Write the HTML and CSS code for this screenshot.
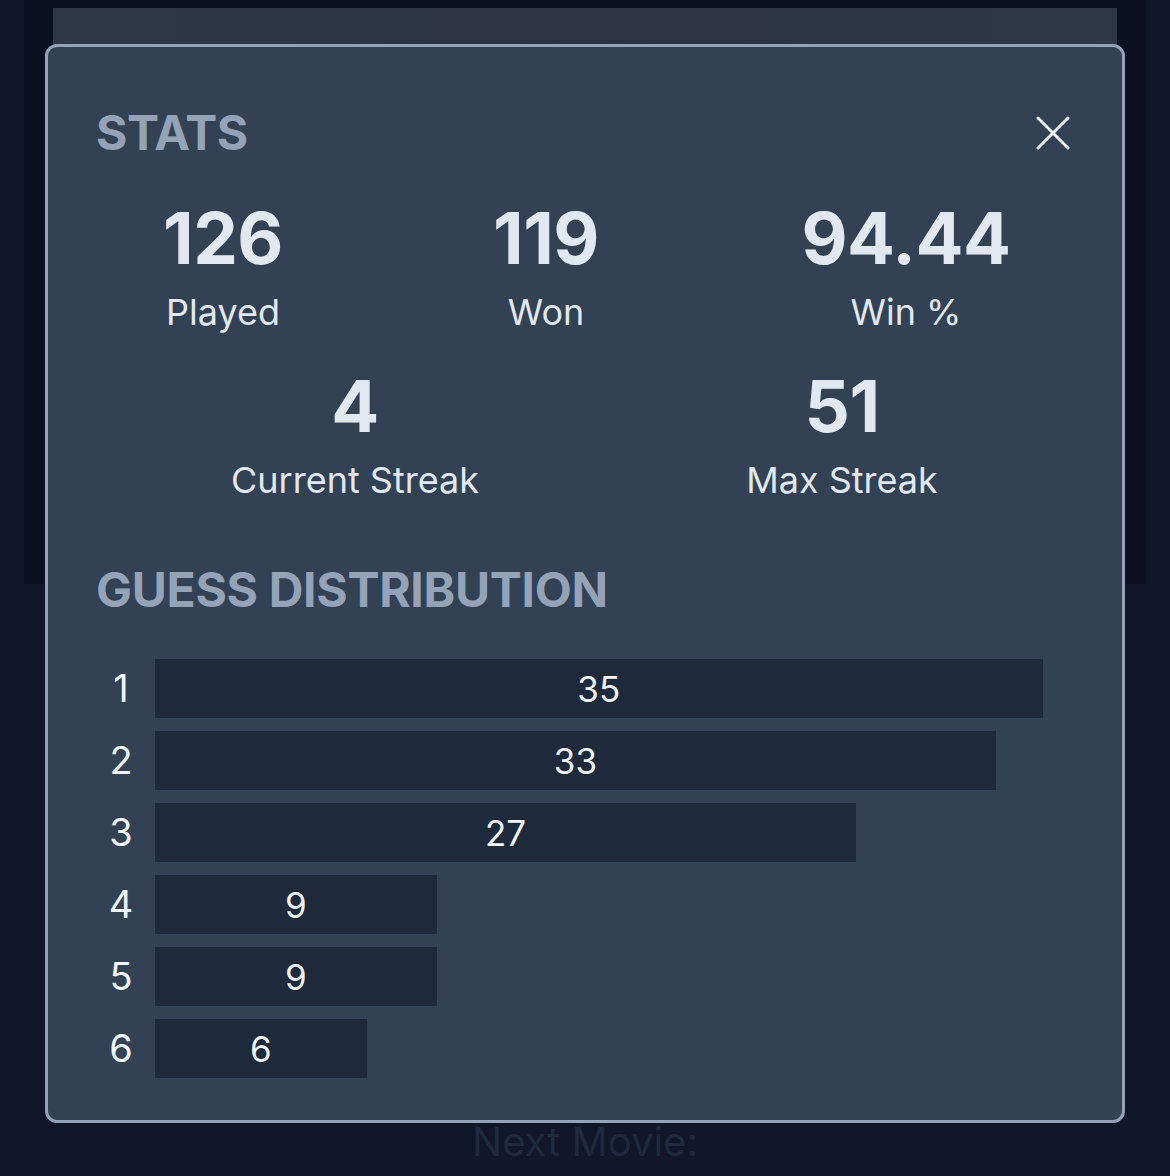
FILE: index.html
```html
<!DOCTYPE html>
<html lang="en">
<head>
<meta charset="utf-8">
<title>Stats</title>
<link rel="stylesheet" href="styles.css">
</head>
<body>
<div class="page">
  <div class="panel">
    <div class="hero"></div>
  </div>
  <div class="next-movie">Next Movie:</div>
</div>

<div class="modal" role="dialog" aria-label="Stats">
  <div class="modal-header">
    <h2 class="heading">STATS</h2>
    <button class="close" aria-label="Close">
      <svg width="34" height="34" viewBox="0 0 34 34" fill="none" stroke="#f1f5f9" stroke-width="3" stroke-linecap="round">
        <path d="M2 2 L32 32"/>
        <path d="M32 2 L2 32"/>
      </svg>
    </button>
  </div>

  <div class="stats-row three">
    <div class="stat"><div class="stat-num">126</div><div class="stat-label">Played</div></div>
    <div class="stat"><div class="stat-num">119</div><div class="stat-label">Won</div></div>
    <div class="stat"><div class="stat-num">94.44</div><div class="stat-label">Win %</div></div>
  </div>
  <div class="stats-row two">
    <div class="stat"><div class="stat-num">4</div><div class="stat-label">Current Streak</div></div>
    <div class="stat"><div class="stat-num">51</div><div class="stat-label">Max Streak</div></div>
  </div>

  <h2 class="heading dist-heading">GUESS DISTRIBUTION</h2>

  <div class="dist">
    <div class="dist-row"><span class="dist-label">1</span><div class="bar" style="--n:35">35</div></div>
    <div class="dist-row"><span class="dist-label">2</span><div class="bar" style="--n:33">33</div></div>
    <div class="dist-row"><span class="dist-label">3</span><div class="bar" style="--n:27">27</div></div>
    <div class="dist-row"><span class="dist-label">4</span><div class="bar" style="--n:9">9</div></div>
    <div class="dist-row"><span class="dist-label">5</span><div class="bar" style="--n:9">9</div></div>
    <div class="dist-row"><span class="dist-label">6</span><div class="bar" style="--n:6">6</div></div>
  </div>
</div>
</body>
</html>
```

FILE: styles.css
```css
* { box-sizing: border-box; }

html, body {
  margin: 0;
  padding: 0;
}

body {
  background: #0f1729;
  font-family: Inter, "Noto Sans", sans-serif;
  color: #e2e8f0;
  width: 1170px;
  height: 1176px;
  overflow: hidden;
  position: relative;
}

.page {
  padding: 0 24px;
}

.panel {
  height: 584px;
  background: #0b1120;
  padding: 8px 29px 0;
}

.hero {
  height: 240px;
  background: linear-gradient(90deg, #2e3746 0%, #2c3443 50%, #2e3746 100%);
}

.next-movie {
  margin-top: 534px;
  text-align: center;
  font-size: 40px;
  line-height: 48px;
  color: #1f2a3d;
}

.modal {
  position: absolute;
  left: 45px;
  top: 44px;
  width: 1080px;
  height: 1079px;
  background: #334155;
  border: 3px solid #94a3b8;
  border-radius: 12px;
  padding: 62px 52px 0 48px;
}

.modal-header {
  display: flex;
  align-items: center;
  justify-content: space-between;
}

.heading {
  margin: 0;
  font-size: 48px;
  line-height: 48px;
  font-weight: 700;
  color: #94a3b8;
  letter-spacing: -0.5px;
}

.close {
  background: none;
  border: 0;
  padding: 0;
  width: 34px;
  height: 34px;
  display: flex;
  cursor: pointer;
}

.stats-row {
  display: grid;
  justify-items: center;
}

.stats-row.three {
  grid-template-columns: 254px 392px 1fr;
  margin-top: 45px;
}

.stats-row.two {
  grid-template-columns: 518px 1fr;
  margin-top: 38px;
}

.stat {
  display: flex;
  flex-direction: column;
  align-items: center;
}

.stat-num {
  font-size: 71px;
  line-height: 72px;
  font-weight: 700;
  color: #e2e8f0;
  letter-spacing: -0.5px;
}

.stat-label {
  margin-top: 18px;
  font-size: 36px;
  line-height: 40px;
  color: #e2e8f0;
}

.dist-heading {
  margin-top: 66px;
  font-size: 48px;
  line-height: 48px;
  letter-spacing: -0.3px;
}

.dist {
  margin-top: 45px;
  display: flex;
  flex-direction: column;
  gap: 13px;
}

.dist-row {
  display: flex;
  align-items: center;
  gap: 9px;
}

.dist-label {
  width: 50px;
  text-align: center;
  font-size: 38px;
  line-height: 59px;
  color: #f1f5f9;
}

.bar {
  height: 59px;
  width: calc(72px + var(--n) * 23.3px);
  background: #1e293b;
  display: flex;
  align-items: center;
  justify-content: center;
  font-size: 35px;
  color: #f1f5f9;
}
```
